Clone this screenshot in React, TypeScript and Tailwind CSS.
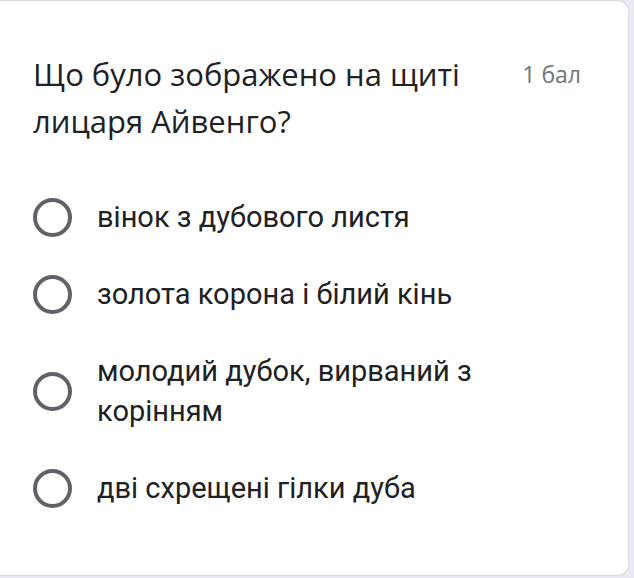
export default function App() {
  const options = [
    'вінок з дубового листя',
    'золота корона і білий кінь',
    'молодий дубок, вирваний з корінням',
    'дві схрещені гілки дуба',
  ];

  return (
    <div className="h-[578px] w-[634px] bg-[#ece9f5] overflow-hidden">
      <div className="w-[629px] h-[576px] bg-white border border-l-0 border-[#dadce0] rounded-r-xl pl-[33px] pr-[47px] pt-[50px] font-['Roboto',sans-serif]">
        {/* Question header */}
        <div className="flex items-start">
          <div className="w-[470px] text-[31px] leading-[47px] text-[#202124] font-['Open_Sans',sans-serif]">
            Що було зображено на щиті лицаря Айвенго?
          </div>
          <div className="ml-auto text-[23px] leading-[47px] text-[#70757a] whitespace-nowrap font-['Open_Sans',sans-serif]">1 бал</div>
        </div>

        {/* Options */}
        <div className="mt-[52px] flex flex-col gap-[37px]">
          {options.map((o) => (
            <label key={o} className="flex items-center">
              <span className="w-[39px] h-[39px] shrink-0 rounded-full border-4 border-[#5f6368]" />
              <span className="ml-[25px] text-[29px] leading-[40px] text-[#202124] max-w-[420px]">{o}</span>
            </label>
          ))}
        </div>
      </div>
    </div>
  );
}
